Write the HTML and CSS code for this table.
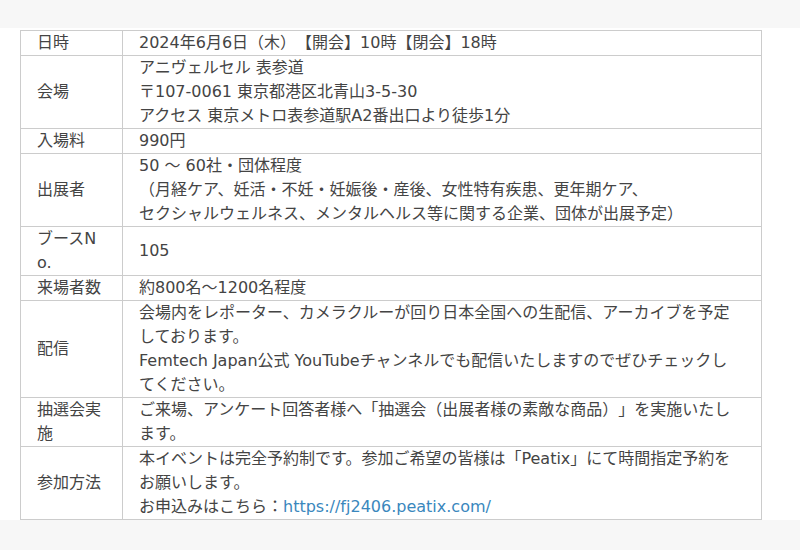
FILE: index.html
```html
<!DOCTYPE html>
<html lang="ja">
<head>
  <meta charset="UTF-8">
  <title>開催概要</title>
  <link rel="stylesheet" href="styles.css">
</head>
<body>

<div id="page">
  <div id="outline">
    <table class="info">
      <colgroup>
        <col class="label-col">
        <col>
      </colgroup>
      <tr>
        <th>日時</th>
        <td>2024年6月6日（木）【開会】10時【閉会】18時</td>
      </tr>
      <tr>
        <th>会場</th>
        <td>アニヴェルセル 表参道<br>〒107-0061 東京都港区北青山3-5-30<br>アクセス 東京メトロ表参道駅A2番出口より徒歩1分</td>
      </tr>
      <tr>
        <th>入場料</th>
        <td>990円</td>
      </tr>
      <tr>
        <th>出展者</th>
        <td>50 〜 60社・団体程度<br>（月経ケア、妊活・不妊・妊娠後・産後、女性特有疾患、更年期ケア、<br>セクシャルウェルネス、メンタルヘルス等に関する企業、団体が出展予定）</td>
      </tr>
      <tr>
        <th>ブースNo.</th>
        <td>105</td>
      </tr>
      <tr>
        <th>来場者数</th>
        <td>約800名〜1200名程度</td>
      </tr>
      <tr>
        <th>配信</th>
        <td>会場内をレポーター、カメラクルーが回り日本全国への生配信、アーカイブを予定しております。<br>Femtech Japan公式 YouTubeチャンネルでも配信いたしますのでぜひチェックしてください。</td>
      </tr>
      <tr>
        <th>抽選会実施</th>
        <td>ご来場、アンケート回答者様へ「抽選会（出展者様の素敵な商品）」を実施いたします。</td>
      </tr>
      <tr>
        <th>参加方法</th>
        <td>本イベントは完全予約制です。参加ご希望の皆様は「Peatix」にて時間指定予約をお願いします。<br>お申込みはこちら：<a href="#">https://fj2406.peatix.com/</a></td>
      </tr>
    </table>
  </div>
</div>

</body>
</html>
```

FILE: styles.css
```css
body {
  margin: 0;
  padding: 0;
  background-color: #f7f7f7;
  font-family: "DejaVu Sans", "Noto Sans CJK JP", sans-serif;
  color: #444;
}

#page {
  padding-top: 28px;
  min-height: 550px;
  box-sizing: border-box;
}

#outline {
  background-color: #fff;
  padding: 2px 38px 0 20px;
}

table.info {
  width: 742px;
  border-collapse: collapse;
  table-layout: fixed;
  font-size: 16px;
  line-height: 24px;
  text-spacing-trim: space-all;
}

table.info col.label-col {
  width: 102px;
}

table.info th,
table.info td {
  border: 1px solid #ccc;
  padding: 0 22px 0 16px;
  vertical-align: middle;
  text-align: left;
  font-weight: normal;
}

table.info th {
  padding-right: 16px;
  word-break: break-all;
}

table.info a {
  color: #3a87bd;
  text-decoration: none;
}
```
